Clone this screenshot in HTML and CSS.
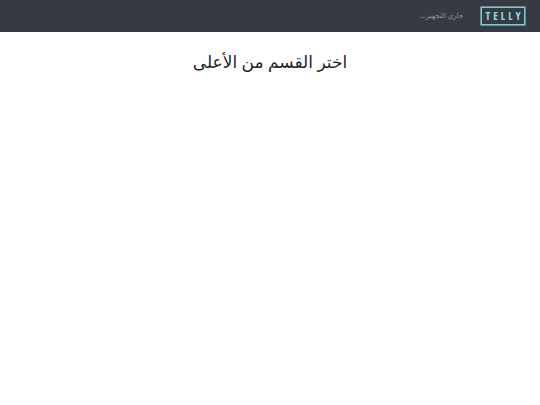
FILE: index.html
```html
<!DOCTYPE html>
<html lang="ar" dir="rtl">
<head>
  <meta charset="UTF-8">
  <meta name="viewport" content="width=device-width, initial-scale=1.0">
  <title>Telly</title>
  <link rel="stylesheet" href="styles.css">
</head>
<body>
  <header class="navbar">
    <a class="navbar-brand" href="#" aria-label="Telly">
      <svg class="logo" width="46" height="20" viewBox="0 0 46 20" direction="ltr">
        <rect class="logo-frame" x="1.2" y="1.2" width="43.6" height="17.6"/>
        <text class="logo-text" x="8 15.5 23 30.5 38" y="14">TELLY</text>
      </svg>
    </a>
    <span class="navbar-status">جاري التجهيز...</span>
  </header>

  <main>
    <h1 class="page-title">اختر القسم من الأعلى</h1>
  </main>
</body>
</html>
```

FILE: styles.css
```css
* {
  margin: 0;
  padding: 0;
  box-sizing: border-box;
}

body {
  font-family: "Noto Sans", "DejaVu Sans", sans-serif;
  background-color: #fff;
  color: #212529;
}

.navbar {
  display: flex;
  align-items: center;
  gap: 17px;
  padding: 6px 14px;
  background-color: #363a42;
}

.navbar-brand {
  display: block;
}

.logo {
  display: block;
}

.logo-frame {
  fill: none;
  stroke: #7accce;
  stroke-width: 1.6;
}

.logo-text {
  font-family: "Open Sans Condensed", "Roboto Condensed", "Liberation Sans Narrow", "DejaVu Sans Condensed", sans-serif;
  font-size: 11px;
  font-weight: bold;
  text-anchor: middle;
  fill: #88dfe0;
}

.navbar-status {
  font-size: 7px;
  line-height: 8px;
  color: #999b9f;
}

main {
  padding: 20px 14px;
}

.page-title {
  font-size: 17px;
  font-weight: normal;
  line-height: 20px;
  text-align: center;
}
```
